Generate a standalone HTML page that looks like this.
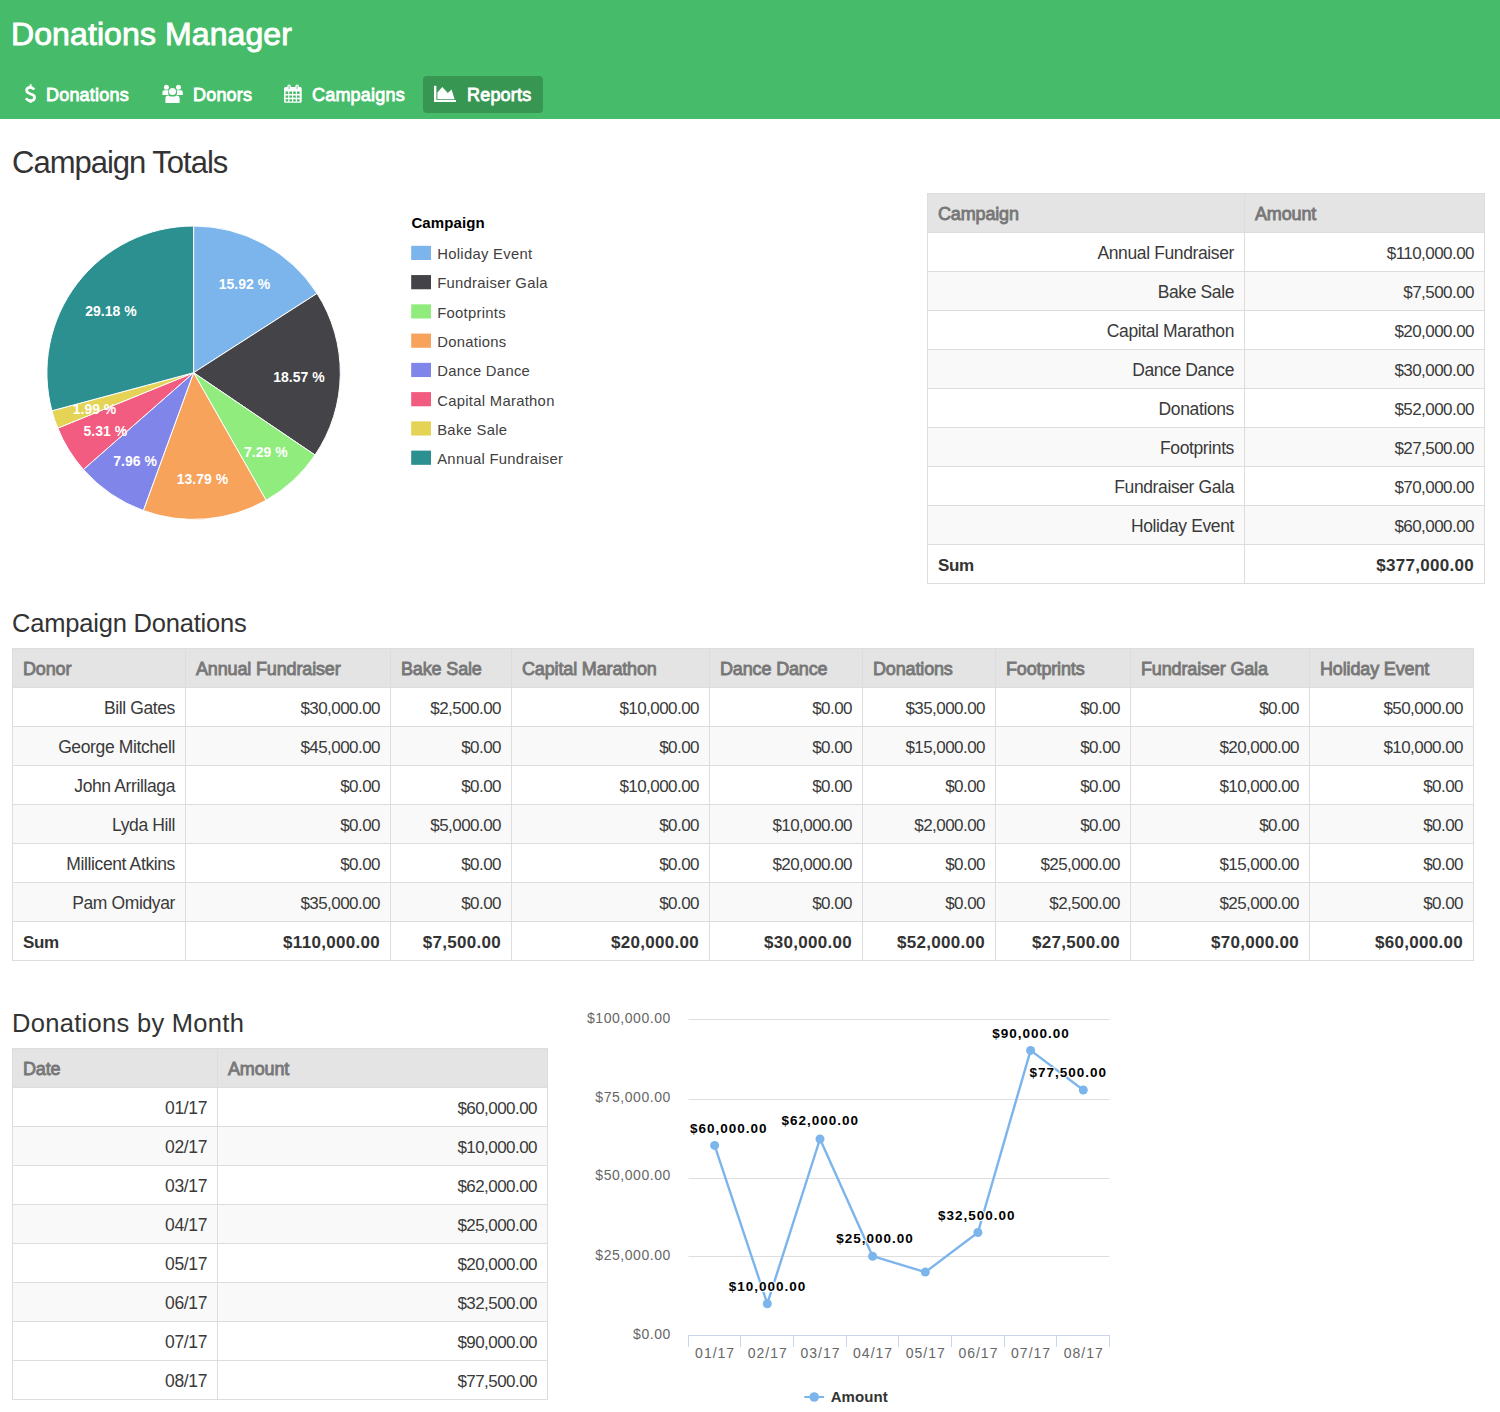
<!DOCTYPE html>
<html><head><meta charset="utf-8"><style>
html,body{margin:0;padding:0;}
body{width:1500px;height:1412px;overflow:hidden;background:#fff;position:relative;font-family:"Liberation Sans",sans-serif;color:#333;}
.a{position:absolute;white-space:nowrap;line-height:1;}
#hdr{position:absolute;left:0;top:0;width:1500px;height:119px;background:#46bb69;}
#title{left:12px;top:17px;font-size:32px;color:#fff;letter-spacing:0.1px;-webkit-text-stroke:0.9px #fff;}
.nav{top:86px;font-size:18px;color:#fff;letter-spacing:0.2px;-webkit-text-stroke:0.85px #fff;}
#rep{position:absolute;left:423px;top:76px;width:120px;height:37px;background:#389653;border-radius:4px;}
.h2{font-size:31px;color:#333;letter-spacing:-1px;}
.h3{font-size:25.5px;color:#333;letter-spacing:-0.2px;}
.th{font-size:18px;color:#777;letter-spacing:-0.15px;-webkit-text-stroke:0.85px #777;}
.td{font-size:17.5px;color:#3a3a3a;letter-spacing:-0.38px;}
.tdn{font-size:17px;color:#3a3a3a;letter-spacing:-0.55px;}
.tb{font-size:17px;font-weight:bold;color:#333;letter-spacing:0.3px;}
.lg{font-size:14.8px;color:#404040;letter-spacing:0.3px;}
.lgt{font-size:15px;font-weight:bold;color:#000;letter-spacing:0.1px;}
.dl{font-size:14px;font-weight:bold;color:#fff;}
.ax{font-size:14px;color:#666;}
.pl{font-family:'Liberation Sans',sans-serif;font-size:13.5px;font-weight:bold;fill:#000;letter-spacing:1px;}
</style></head><body>
<div id="hdr"><div id="rep"></div></div>
<div class="a" id="title" style="left:11.00px;top:18.00px">Donations Manager</div>
<div class="a nav" style="left:46px">Donations</div>
<div class="a nav" style="left:193px">Donors</div>
<div class="a nav" style="left:312px">Campaigns</div>
<div class="a nav" style="left:467px">Reports</div>
<svg class="a" style="left:0;top:0" width="600" height="119" viewBox="0 0 600 119">
<g fill="none" stroke="#fff" stroke-width="2.7" stroke-linecap="butt">
<path d="M34.2 89.6 C33 87.8 31.6 87.3 30.3 87.3 C28 87.3 26.6 88.7 26.6 90.6 C26.6 95 34.6 92.9 34.6 97.2 C34.6 99.3 32.9 100.7 30.5 100.7 C28.6 100.7 27.1 99.9 26 98.2"/>
<path d="M30.6 84.3 V87.3 M30.6 100.7 V103" stroke-width="1.9"/>
</g>
<g fill="#fff">
<circle cx="166.4" cy="87.2" r="2.5"/><circle cx="178.5" cy="87.2" r="2.5"/>
<path d="M162.4 95 V92.3 Q162.4 90.2 164.4 90.2 H168.6 Q168 91.5 168.3 93.5 L168.6 95 Z"/>
<path d="M182.8 95 V92.3 Q182.8 90.2 180.8 90.2 H176.6 Q177.2 91.5 176.9 93.5 L176.6 95 Z"/>
<circle cx="172.5" cy="91.4" r="3.5"/>
<path d="M165.4 103 V98.4 Q165.4 95.4 168.4 95.4 Q170.2 96.6 172.5 96.6 Q174.8 96.6 176.6 95.4 Q179.6 95.4 179.6 98.4 V103 Z"/>
</g>
<g fill="#fff">
<path fill-rule="evenodd" d="M284 88.5 Q284 87 285.5 87 H300.2 Q301.7 87 301.7 88.5 V101.3 Q301.7 102.8 300.2 102.8 H285.5 Q284 102.8 284 101.3 Z
 M285.6 91.6 h2.6 v2.3 h-2.6 z M289.4 91.6 h2.6 v2.3 h-2.6 z M293.2 91.6 h2.6 v2.3 h-2.6 z M297 91.6 h2.6 v2.3 h-2.6 z
 M285.6 95.4 h2.6 v2.4 h-2.6 z M289.4 95.4 h2.6 v2.4 h-2.6 z M293.2 95.4 h2.6 v2.4 h-2.6 z M297 95.4 h2.6 v2.4 h-2.6 z
 M285.6 99.2 h2.6 v2.2 h-2.6 z M289.4 99.2 h2.6 v2.2 h-2.6 z M293.2 99.2 h2.6 v2.2 h-2.6 z M297 99.2 h2.6 v2.2 h-2.6 z"/>
<rect x="287.4" y="84.4" width="3.4" height="5.4" rx="1.5"/><rect x="295.4" y="84.4" width="3.4" height="5.4" rx="1.5"/>
</g>
<rect x="288.6" y="85.6" width="1" height="3.4" fill="#7fc9a0"/><rect x="296.6" y="85.6" width="1" height="3.4" fill="#7fc9a0"/>
<g fill="#fff">
<rect x="434" y="85.8" width="2.4" height="16.2"/><rect x="434" y="100" width="22" height="2"/>
<path d="M437.4 99.2 V92.6 L442.3 87 L447.8 93 L451.6 89.6 L454.6 99.2 Z"/>
</g>
</svg>
<div class="a h2" style="left:12.00px;top:147.00px">Campaign Totals</div>
<div class="a h3" style="left:12.00px;top:611.00px">Campaign Donations</div>
<div class="a h3" style="left:12.00px;top:1011.00px;letter-spacing:0.3px">Donations by Month</div>
<svg class="a" style="left:0;top:200px" width="600" height="340" viewBox="0 200 600 340"><g stroke="#fff" stroke-width="1" stroke-linejoin="round"><path d="M193.6 372.7L193.60 226.00A146.7 146.7 0 0 1 317.04 293.43Z" fill="#7cb5ec"/><path d="M193.6 372.7L317.04 293.43A146.7 146.7 0 0 1 315.02 455.03Z" fill="#434348"/><path d="M193.6 372.7L315.02 455.03A146.7 146.7 0 0 1 266.07 500.25Z" fill="#90ed7d"/><path d="M193.6 372.7L266.07 500.25A146.7 146.7 0 0 1 143.30 510.51Z" fill="#f7a35c"/><path d="M193.6 372.7L143.30 510.51A146.7 146.7 0 0 1 83.39 469.52Z" fill="#8085e9"/><path d="M193.6 372.7L83.39 469.52A146.7 146.7 0 0 1 57.78 428.13Z" fill="#f15c80"/><path d="M193.6 372.7L57.78 428.13A146.7 146.7 0 0 1 51.93 410.77Z" fill="#e4d354"/><path d="M193.6 372.7L51.93 410.77A146.7 146.7 0 0 1 193.60 226.00Z" fill="#2b908f"/></g>
<rect x="411.2" y="245.80" width="19.8" height="14.2" fill="#7cb5ec"/>
<rect x="411.2" y="275.06" width="19.8" height="14.2" fill="#434348"/>
<rect x="411.2" y="304.32" width="19.8" height="14.2" fill="#90ed7d"/>
<rect x="411.2" y="333.58" width="19.8" height="14.2" fill="#f7a35c"/>
<rect x="411.2" y="362.84" width="19.8" height="14.2" fill="#8085e9"/>
<rect x="411.2" y="392.10" width="19.8" height="14.2" fill="#f15c80"/>
<rect x="411.2" y="421.36" width="19.8" height="14.2" fill="#e4d354"/>
<rect x="411.2" y="450.62" width="19.8" height="14.2" fill="#2b908f"/>
</svg>
<div class="a dl" style="left:-55.60px;width:600px;text-align:center;top:277.00px">15.92 %</div>
<div class="a dl" style="left:-1.10px;width:600px;text-align:center;top:370.00px">18.57 %</div>
<div class="a dl" style="left:-34.20px;width:600px;text-align:center;top:445.00px">7.29 %</div>
<div class="a dl" style="left:-97.60px;width:600px;text-align:center;top:472.00px">13.79 %</div>
<div class="a dl" style="left:-164.90px;width:600px;text-align:center;top:454.00px">7.96 %</div>
<div class="a dl" style="left:-194.70px;width:600px;text-align:center;top:424.00px">5.31 %</div>
<div class="a dl" style="left:-205.50px;width:600px;text-align:center;top:402.00px">1.99 %</div>
<div class="a dl" style="left:-189.10px;width:600px;text-align:center;top:304.00px">29.18 %</div>
<div class="a lgt" style="left:411.40px;top:215.00px">Campaign</div>
<div class="a lg" style="left:437.20px;top:247.00px">Holiday Event</div>
<div class="a lg" style="left:437.20px;top:276.00px">Fundraiser Gala</div>
<div class="a lg" style="left:437.20px;top:306.00px">Footprints</div>
<div class="a lg" style="left:437.20px;top:335.00px">Donations</div>
<div class="a lg" style="left:437.20px;top:364.00px">Dance Dance</div>
<div class="a lg" style="left:437.20px;top:394.00px">Capital Marathon</div>
<div class="a lg" style="left:437.20px;top:423.00px">Bake Sale</div>
<div class="a lg" style="left:437.20px;top:452.00px">Annual Fundraiser</div>
<div class="a" style="left:927px;top:193px;width:558px;height:39px;background:#e4e4e4"></div>
<div class="a" style="left:927px;top:271px;width:558px;height:39px;background:#f9f9f9"></div>
<div class="a" style="left:927px;top:349px;width:558px;height:39px;background:#f9f9f9"></div>
<div class="a" style="left:927px;top:427px;width:558px;height:39px;background:#f9f9f9"></div>
<div class="a" style="left:927px;top:505px;width:558px;height:39px;background:#f9f9f9"></div>
<div class="a" style="left:927px;top:193px;width:558px;height:1px;background:#dddddd"></div>
<div class="a" style="left:927px;top:232px;width:558px;height:1px;background:#dddddd"></div>
<div class="a" style="left:927px;top:271px;width:558px;height:1px;background:#dddddd"></div>
<div class="a" style="left:927px;top:310px;width:558px;height:1px;background:#dddddd"></div>
<div class="a" style="left:927px;top:349px;width:558px;height:1px;background:#dddddd"></div>
<div class="a" style="left:927px;top:388px;width:558px;height:1px;background:#dddddd"></div>
<div class="a" style="left:927px;top:427px;width:558px;height:1px;background:#dddddd"></div>
<div class="a" style="left:927px;top:466px;width:558px;height:1px;background:#dddddd"></div>
<div class="a" style="left:927px;top:505px;width:558px;height:1px;background:#dddddd"></div>
<div class="a" style="left:927px;top:544px;width:558px;height:1px;background:#dddddd"></div>
<div class="a" style="left:927px;top:583px;width:558px;height:1px;background:#dddddd"></div>
<div class="a" style="left:927px;top:193px;width:1px;height:391px;background:#dddddd"></div>
<div class="a" style="left:1244px;top:193px;width:1px;height:391px;background:#dddddd"></div>
<div class="a" style="left:1484px;top:193px;width:1px;height:391px;background:#dddddd"></div>
<div class="a th" style="left:938.00px;top:205.00px">Campaign</div>
<div class="a th" style="left:1255.00px;top:205.00px">Amount</div>
<div class="a td" style="right:266.00px;top:245.00px">Annual Fundraiser</div>
<div class="a tdn" style="right:26.00px;top:245.00px">$110,000.00</div>
<div class="a td" style="right:266.00px;top:284.00px">Bake Sale</div>
<div class="a tdn" style="right:26.00px;top:284.00px">$7,500.00</div>
<div class="a td" style="right:266.00px;top:323.00px">Capital Marathon</div>
<div class="a tdn" style="right:26.00px;top:323.00px">$20,000.00</div>
<div class="a td" style="right:266.00px;top:362.00px">Dance Dance</div>
<div class="a tdn" style="right:26.00px;top:362.00px">$30,000.00</div>
<div class="a td" style="right:266.00px;top:401.00px">Donations</div>
<div class="a tdn" style="right:26.00px;top:401.00px">$52,000.00</div>
<div class="a td" style="right:266.00px;top:440.00px">Footprints</div>
<div class="a tdn" style="right:26.00px;top:440.00px">$27,500.00</div>
<div class="a td" style="right:266.00px;top:479.00px">Fundraiser Gala</div>
<div class="a tdn" style="right:26.00px;top:479.00px">$70,000.00</div>
<div class="a td" style="right:266.00px;top:518.00px">Holiday Event</div>
<div class="a tdn" style="right:26.00px;top:518.00px">$60,000.00</div>
<div class="a tb" style="left:938.00px;top:557.00px;letter-spacing:-0.4px">Sum</div>
<div class="a tb" style="right:26.00px;top:557.00px">$377,000.00</div>
<div class="a" style="left:12px;top:648px;width:1462px;height:39px;background:#e4e4e4"></div>
<div class="a" style="left:12px;top:726px;width:1462px;height:39px;background:#f9f9f9"></div>
<div class="a" style="left:12px;top:804px;width:1462px;height:39px;background:#f9f9f9"></div>
<div class="a" style="left:12px;top:882px;width:1462px;height:39px;background:#f9f9f9"></div>
<div class="a" style="left:12px;top:648px;width:1462px;height:1px;background:#dddddd"></div>
<div class="a" style="left:12px;top:687px;width:1462px;height:1px;background:#dddddd"></div>
<div class="a" style="left:12px;top:726px;width:1462px;height:1px;background:#dddddd"></div>
<div class="a" style="left:12px;top:765px;width:1462px;height:1px;background:#dddddd"></div>
<div class="a" style="left:12px;top:804px;width:1462px;height:1px;background:#dddddd"></div>
<div class="a" style="left:12px;top:843px;width:1462px;height:1px;background:#dddddd"></div>
<div class="a" style="left:12px;top:882px;width:1462px;height:1px;background:#dddddd"></div>
<div class="a" style="left:12px;top:921px;width:1462px;height:1px;background:#dddddd"></div>
<div class="a" style="left:12px;top:960px;width:1462px;height:1px;background:#dddddd"></div>
<div class="a" style="left:12px;top:648px;width:1px;height:313px;background:#dddddd"></div>
<div class="a" style="left:185px;top:648px;width:1px;height:313px;background:#dddddd"></div>
<div class="a" style="left:390px;top:648px;width:1px;height:313px;background:#dddddd"></div>
<div class="a" style="left:511px;top:648px;width:1px;height:313px;background:#dddddd"></div>
<div class="a" style="left:709px;top:648px;width:1px;height:313px;background:#dddddd"></div>
<div class="a" style="left:862px;top:648px;width:1px;height:313px;background:#dddddd"></div>
<div class="a" style="left:995px;top:648px;width:1px;height:313px;background:#dddddd"></div>
<div class="a" style="left:1130px;top:648px;width:1px;height:313px;background:#dddddd"></div>
<div class="a" style="left:1309px;top:648px;width:1px;height:313px;background:#dddddd"></div>
<div class="a" style="left:1473px;top:648px;width:1px;height:313px;background:#dddddd"></div>
<div class="a th" style="left:23.00px;top:660.00px">Donor</div>
<div class="a th" style="left:196.00px;top:660.00px">Annual Fundraiser</div>
<div class="a th" style="left:401.00px;top:660.00px">Bake Sale</div>
<div class="a th" style="left:522.00px;top:660.00px">Capital Marathon</div>
<div class="a th" style="left:720.00px;top:660.00px">Dance Dance</div>
<div class="a th" style="left:873.00px;top:660.00px">Donations</div>
<div class="a th" style="left:1006.00px;top:660.00px">Footprints</div>
<div class="a th" style="left:1141.00px;top:660.00px">Fundraiser Gala</div>
<div class="a th" style="left:1320.00px;top:660.00px">Holiday Event</div>
<div class="a td" style="right:1325.00px;top:700.00px">Bill Gates</div>
<div class="a tdn" style="right:1120.00px;top:700.00px">$30,000.00</div>
<div class="a tdn" style="right:999.00px;top:700.00px">$2,500.00</div>
<div class="a tdn" style="right:801.00px;top:700.00px">$10,000.00</div>
<div class="a tdn" style="right:648.00px;top:700.00px">$0.00</div>
<div class="a tdn" style="right:515.00px;top:700.00px">$35,000.00</div>
<div class="a tdn" style="right:380.00px;top:700.00px">$0.00</div>
<div class="a tdn" style="right:201.00px;top:700.00px">$0.00</div>
<div class="a tdn" style="right:37.00px;top:700.00px">$50,000.00</div>
<div class="a td" style="right:1325.00px;top:739.00px">George Mitchell</div>
<div class="a tdn" style="right:1120.00px;top:739.00px">$45,000.00</div>
<div class="a tdn" style="right:999.00px;top:739.00px">$0.00</div>
<div class="a tdn" style="right:801.00px;top:739.00px">$0.00</div>
<div class="a tdn" style="right:648.00px;top:739.00px">$0.00</div>
<div class="a tdn" style="right:515.00px;top:739.00px">$15,000.00</div>
<div class="a tdn" style="right:380.00px;top:739.00px">$0.00</div>
<div class="a tdn" style="right:201.00px;top:739.00px">$20,000.00</div>
<div class="a tdn" style="right:37.00px;top:739.00px">$10,000.00</div>
<div class="a td" style="right:1325.00px;top:778.00px">John Arrillaga</div>
<div class="a tdn" style="right:1120.00px;top:778.00px">$0.00</div>
<div class="a tdn" style="right:999.00px;top:778.00px">$0.00</div>
<div class="a tdn" style="right:801.00px;top:778.00px">$10,000.00</div>
<div class="a tdn" style="right:648.00px;top:778.00px">$0.00</div>
<div class="a tdn" style="right:515.00px;top:778.00px">$0.00</div>
<div class="a tdn" style="right:380.00px;top:778.00px">$0.00</div>
<div class="a tdn" style="right:201.00px;top:778.00px">$10,000.00</div>
<div class="a tdn" style="right:37.00px;top:778.00px">$0.00</div>
<div class="a td" style="right:1325.00px;top:817.00px">Lyda Hill</div>
<div class="a tdn" style="right:1120.00px;top:817.00px">$0.00</div>
<div class="a tdn" style="right:999.00px;top:817.00px">$5,000.00</div>
<div class="a tdn" style="right:801.00px;top:817.00px">$0.00</div>
<div class="a tdn" style="right:648.00px;top:817.00px">$10,000.00</div>
<div class="a tdn" style="right:515.00px;top:817.00px">$2,000.00</div>
<div class="a tdn" style="right:380.00px;top:817.00px">$0.00</div>
<div class="a tdn" style="right:201.00px;top:817.00px">$0.00</div>
<div class="a tdn" style="right:37.00px;top:817.00px">$0.00</div>
<div class="a td" style="right:1325.00px;top:856.00px">Millicent Atkins</div>
<div class="a tdn" style="right:1120.00px;top:856.00px">$0.00</div>
<div class="a tdn" style="right:999.00px;top:856.00px">$0.00</div>
<div class="a tdn" style="right:801.00px;top:856.00px">$0.00</div>
<div class="a tdn" style="right:648.00px;top:856.00px">$20,000.00</div>
<div class="a tdn" style="right:515.00px;top:856.00px">$0.00</div>
<div class="a tdn" style="right:380.00px;top:856.00px">$25,000.00</div>
<div class="a tdn" style="right:201.00px;top:856.00px">$15,000.00</div>
<div class="a tdn" style="right:37.00px;top:856.00px">$0.00</div>
<div class="a td" style="right:1325.00px;top:895.00px">Pam Omidyar</div>
<div class="a tdn" style="right:1120.00px;top:895.00px">$35,000.00</div>
<div class="a tdn" style="right:999.00px;top:895.00px">$0.00</div>
<div class="a tdn" style="right:801.00px;top:895.00px">$0.00</div>
<div class="a tdn" style="right:648.00px;top:895.00px">$0.00</div>
<div class="a tdn" style="right:515.00px;top:895.00px">$0.00</div>
<div class="a tdn" style="right:380.00px;top:895.00px">$2,500.00</div>
<div class="a tdn" style="right:201.00px;top:895.00px">$25,000.00</div>
<div class="a tdn" style="right:37.00px;top:895.00px">$0.00</div>
<div class="a tb" style="left:23.00px;top:934.00px;letter-spacing:-0.4px">Sum</div>
<div class="a tb" style="right:1120.00px;top:934.00px">$110,000.00</div>
<div class="a tb" style="right:999.00px;top:934.00px">$7,500.00</div>
<div class="a tb" style="right:801.00px;top:934.00px">$20,000.00</div>
<div class="a tb" style="right:648.00px;top:934.00px">$30,000.00</div>
<div class="a tb" style="right:515.00px;top:934.00px">$52,000.00</div>
<div class="a tb" style="right:380.00px;top:934.00px">$27,500.00</div>
<div class="a tb" style="right:201.00px;top:934.00px">$70,000.00</div>
<div class="a tb" style="right:37.00px;top:934.00px">$60,000.00</div>
<div class="a" style="left:12px;top:1048px;width:536px;height:39px;background:#e4e4e4"></div>
<div class="a" style="left:12px;top:1126px;width:536px;height:39px;background:#f9f9f9"></div>
<div class="a" style="left:12px;top:1204px;width:536px;height:39px;background:#f9f9f9"></div>
<div class="a" style="left:12px;top:1282px;width:536px;height:39px;background:#f9f9f9"></div>
<div class="a" style="left:12px;top:1048px;width:536px;height:1px;background:#dddddd"></div>
<div class="a" style="left:12px;top:1087px;width:536px;height:1px;background:#dddddd"></div>
<div class="a" style="left:12px;top:1126px;width:536px;height:1px;background:#dddddd"></div>
<div class="a" style="left:12px;top:1165px;width:536px;height:1px;background:#dddddd"></div>
<div class="a" style="left:12px;top:1204px;width:536px;height:1px;background:#dddddd"></div>
<div class="a" style="left:12px;top:1243px;width:536px;height:1px;background:#dddddd"></div>
<div class="a" style="left:12px;top:1282px;width:536px;height:1px;background:#dddddd"></div>
<div class="a" style="left:12px;top:1321px;width:536px;height:1px;background:#dddddd"></div>
<div class="a" style="left:12px;top:1360px;width:536px;height:1px;background:#dddddd"></div>
<div class="a" style="left:12px;top:1399px;width:536px;height:1px;background:#dddddd"></div>
<div class="a" style="left:12px;top:1048px;width:1px;height:352px;background:#dddddd"></div>
<div class="a" style="left:217px;top:1048px;width:1px;height:352px;background:#dddddd"></div>
<div class="a" style="left:547px;top:1048px;width:1px;height:352px;background:#dddddd"></div>
<div class="a th" style="left:23.00px;top:1060.00px">Date</div>
<div class="a th" style="left:228.00px;top:1060.00px">Amount</div>
<div class="a td" style="right:1293.00px;top:1100.00px">01/17</div>
<div class="a tdn" style="right:963.00px;top:1100.00px">$60,000.00</div>
<div class="a td" style="right:1293.00px;top:1139.00px">02/17</div>
<div class="a tdn" style="right:963.00px;top:1139.00px">$10,000.00</div>
<div class="a td" style="right:1293.00px;top:1178.00px">03/17</div>
<div class="a tdn" style="right:963.00px;top:1178.00px">$62,000.00</div>
<div class="a td" style="right:1293.00px;top:1217.00px">04/17</div>
<div class="a tdn" style="right:963.00px;top:1217.00px">$25,000.00</div>
<div class="a td" style="right:1293.00px;top:1256.00px">05/17</div>
<div class="a tdn" style="right:963.00px;top:1256.00px">$20,000.00</div>
<div class="a td" style="right:1293.00px;top:1295.00px">06/17</div>
<div class="a tdn" style="right:963.00px;top:1295.00px">$32,500.00</div>
<div class="a td" style="right:1293.00px;top:1334.00px">07/17</div>
<div class="a tdn" style="right:963.00px;top:1334.00px">$90,000.00</div>
<div class="a td" style="right:1293.00px;top:1373.00px">08/17</div>
<div class="a tdn" style="right:963.00px;top:1373.00px">$77,500.00</div>
<svg class="a" style="left:560px;top:1000px" width="600" height="412" viewBox="560 1000 600 412">
<path d="M688.5 1019.5H1109.5" stroke="#dedede" stroke-width="1"/>
<path d="M688.5 1099.5H1109.5" stroke="#dedede" stroke-width="1"/>
<path d="M688.5 1178.5H1109.5" stroke="#dedede" stroke-width="1"/>
<path d="M688.5 1256.5H1109.5" stroke="#dedede" stroke-width="1"/>
<path d="M688 1335.5H1110 M688.5 1335.5V1347M740.5 1335.5V1347M793.5 1335.5V1347M846.5 1335.5V1347M898.5 1335.5V1347M951.5 1335.5V1347M1004.5 1335.5V1347M1056.5 1335.5V1347M1109.5 1335.5V1347" stroke="#ccd6eb" stroke-width="1" fill="none"/>
<polyline fill="none" stroke="#7cb5ec" stroke-width="2.4" stroke-linejoin="round" points="714.6,1145.4 767.3,1303.7 820.0,1139.0 872.6,1256.2 925.3,1272.1 977.9,1232.5 1030.6,1050.4 1083.3,1090.0"/>
<circle cx="714.6" cy="1145.4" r="4.5" fill="#7cb5ec"/>
<circle cx="767.3" cy="1303.7" r="4.5" fill="#7cb5ec"/>
<circle cx="820.0" cy="1139.0" r="4.5" fill="#7cb5ec"/>
<circle cx="872.6" cy="1256.2" r="4.5" fill="#7cb5ec"/>
<circle cx="925.3" cy="1272.1" r="4.5" fill="#7cb5ec"/>
<circle cx="977.9" cy="1232.5" r="4.5" fill="#7cb5ec"/>
<circle cx="1030.6" cy="1050.4" r="4.5" fill="#7cb5ec"/>
<circle cx="1083.3" cy="1090.0" r="4.5" fill="#7cb5ec"/>
<path d="M804.3 1397H824.1" stroke="#7cb5ec" stroke-width="2"/><circle cx="814.2" cy="1397" r="4.8" fill="#7cb5ec"/>
</svg>
<div class="a ax" style="right:829.10px;top:1011.00px;letter-spacing:0.55px">$100,000.00</div>
<div class="a ax" style="right:829.10px;top:1090.00px;letter-spacing:0.55px">$75,000.00</div>
<div class="a ax" style="right:829.10px;top:1168.00px;letter-spacing:0.55px">$50,000.00</div>
<div class="a ax" style="right:829.10px;top:1248.00px;letter-spacing:0.55px">$25,000.00</div>
<div class="a ax" style="right:829.10px;top:1327.00px;letter-spacing:0.55px">$0.00</div>
<div class="a ax" style="left:415.13px;width:600px;text-align:center;top:1346.00px;letter-spacing:1.0px">01/17</div>
<div class="a ax" style="left:467.79px;width:600px;text-align:center;top:1346.00px;letter-spacing:1.0px">02/17</div>
<div class="a ax" style="left:520.46px;width:600px;text-align:center;top:1346.00px;letter-spacing:1.0px">03/17</div>
<div class="a ax" style="left:573.12px;width:600px;text-align:center;top:1346.00px;letter-spacing:1.0px">04/17</div>
<div class="a ax" style="left:625.78px;width:600px;text-align:center;top:1346.00px;letter-spacing:1.0px">05/17</div>
<div class="a ax" style="left:678.44px;width:600px;text-align:center;top:1346.00px;letter-spacing:1.0px">06/17</div>
<div class="a ax" style="left:731.11px;width:600px;text-align:center;top:1346.00px;letter-spacing:1.0px">07/17</div>
<div class="a ax" style="left:783.77px;width:600px;text-align:center;top:1346.00px;letter-spacing:1.0px">08/17</div>
<svg class="a" style="left:560px;top:1000px" width="600" height="412" viewBox="560 1000 600 412"><text x="689.9" y="1132.7" class="pl" style="paint-order:stroke;stroke:#fff;stroke-width:2px;stroke-linejoin:round">$60,000.00</text><text x="728.8" y="1290.5" class="pl" style="paint-order:stroke;stroke:#fff;stroke-width:2px;stroke-linejoin:round">$10,000.00</text><text x="781.5" y="1125.3" class="pl" style="paint-order:stroke;stroke:#fff;stroke-width:2px;stroke-linejoin:round">$62,000.00</text><text x="836.2" y="1243" class="pl" style="paint-order:stroke;stroke:#fff;stroke-width:2px;stroke-linejoin:round">$25,000.00</text><text x="937.9" y="1219.6" class="pl" style="paint-order:stroke;stroke:#fff;stroke-width:2px;stroke-linejoin:round">$32,500.00</text><text x="992.2" y="1037.9" class="pl" style="paint-order:stroke;stroke:#fff;stroke-width:2px;stroke-linejoin:round">$90,000.00</text><text x="1029.5" y="1076.9" class="pl" style="paint-order:stroke;stroke:#fff;stroke-width:2px;stroke-linejoin:round">$77,500.00</text></svg>
<div class="a lgt" style="left:830.70px;top:1389.00px;color:#333">Amount</div>
</body></html>
